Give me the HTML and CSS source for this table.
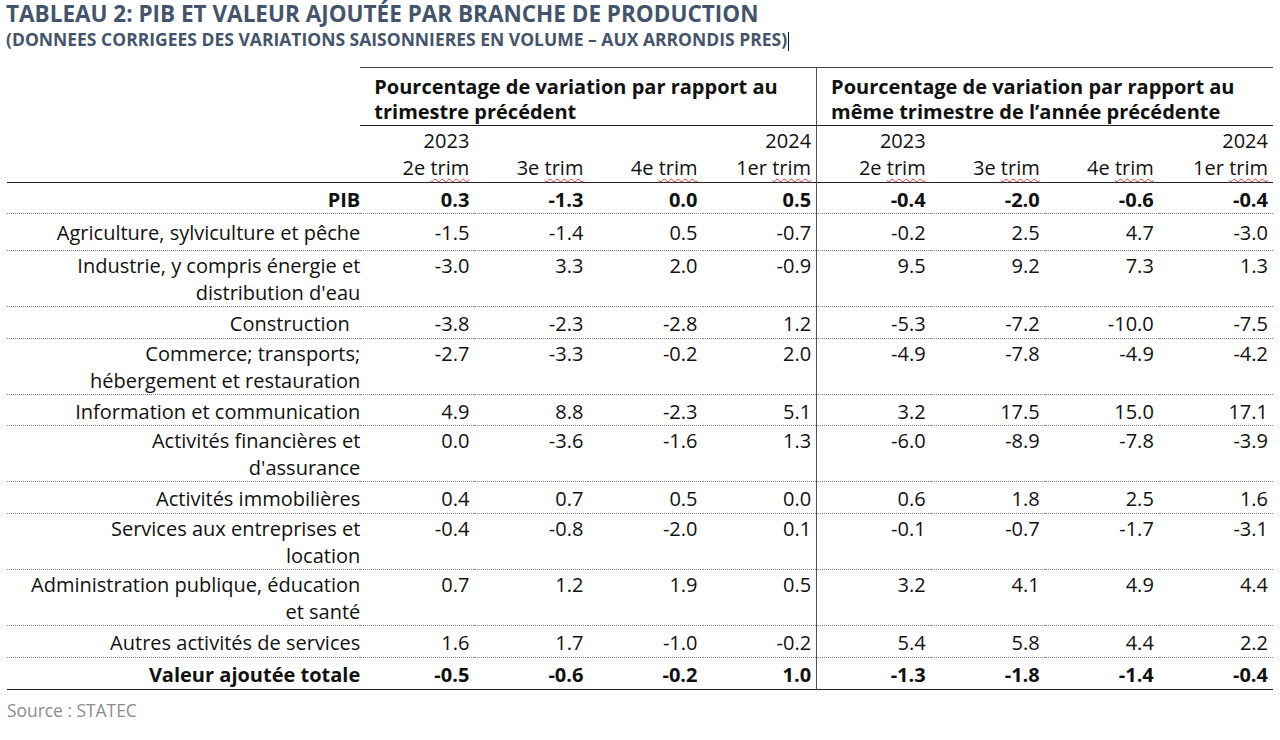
FILE: index.html
```html
<!DOCTYPE html>
<html lang="fr">
<head>
<meta charset="utf-8">
<title>Tableau 2</title>
<link rel="stylesheet" href="styles.css">
</head>
<body>
<h1 class="title">TABLEAU 2: PIB ET VALEUR AJOUTÉE PAR BRANCHE DE PRODUCTION</h1>
<p class="subtitle">(DONNEES CORRIGEES DES VARIATIONS SAISONNIERES EN VOLUME – AUX ARRONDIS PRES)<span class="caret"></span></p>
<table class="data">
  <colgroup>
    <col class="c-label">
    <col class="c-num"><col class="c-num"><col class="c-num"><col class="c-num">
    <col class="c-num"><col class="c-num"><col class="c-num"><col class="c-num">
  </colgroup>
  <thead>
    <tr class="grp">
      <th class="blank"></th>
      <th colspan="4" class="gh sep">Pourcentage de variation par rapport au<br>trimestre précédent</th>
      <th colspan="4" class="gh">Pourcentage de variation par rapport au<br>même trimestre de l’année précédente</th>
    </tr>
    <tr class="per">
      <th class="blank"></th>
      <th>2023<br>2e <span class="sp">trim</span></th>
      <th><br>3e <span class="sp">trim</span></th>
      <th><br>4e <span class="sp">trim</span></th>
      <th class="sep">2024<br>1er <span class="sp">trim</span></th>
      <th>2023<br>2e <span class="sp">trim</span></th>
      <th><br>3e <span class="sp">trim</span></th>
      <th><br>4e <span class="sp">trim</span></th>
      <th>2024<br>1er <span class="sp">trim</span></th>
    </tr>
  </thead>
  <tbody>
    <tr class="one short bold"><td>PIB</td><td>0.3</td><td>-1.3</td><td>0.0</td><td class="sep">0.5</td><td>-0.4</td><td>-2.0</td><td>-0.6</td><td>-0.4</td></tr>
    <tr class="one tall"><td>Agriculture, sylviculture et pêche</td><td>-1.5</td><td>-1.4</td><td>0.5</td><td class="sep">-0.7</td><td>-0.2</td><td>2.5</td><td>4.7</td><td>-3.0</td></tr>
    <tr class="two"><td>Industrie, y compris énergie et<br>distribution d'eau</td><td>-3.0</td><td>3.3</td><td>2.0</td><td class="sep">-0.9</td><td>9.5</td><td>9.2</td><td>7.3</td><td>1.3</td></tr>
    <tr class="one"><td>Construction&nbsp;&nbsp;</td><td>-3.8</td><td>-2.3</td><td>-2.8</td><td class="sep">1.2</td><td>-5.3</td><td>-7.2</td><td>-10.0</td><td>-7.5</td></tr>
    <tr class="two"><td>Commerce; transports;<br>hébergement et restauration</td><td>-2.7</td><td>-3.3</td><td>-0.2</td><td class="sep">2.0</td><td>-4.9</td><td>-7.8</td><td>-4.9</td><td>-4.2</td></tr>
    <tr class="one short"><td>Information et communication</td><td>4.9</td><td>8.8</td><td>-2.3</td><td class="sep">5.1</td><td>3.2</td><td>17.5</td><td>15.0</td><td>17.1</td></tr>
    <tr class="two"><td>Activités financières et<br>d'assurance</td><td>0.0</td><td>-3.6</td><td>-1.6</td><td class="sep">1.3</td><td>-6.0</td><td>-8.9</td><td>-7.8</td><td>-3.9</td></tr>
    <tr class="one"><td>Activités immobilières</td><td>0.4</td><td>0.7</td><td>0.5</td><td class="sep">0.0</td><td>0.6</td><td>1.8</td><td>2.5</td><td>1.6</td></tr>
    <tr class="two"><td>Services aux entreprises et<br>location</td><td>-0.4</td><td>-0.8</td><td>-2.0</td><td class="sep">0.1</td><td>-0.1</td><td>-0.7</td><td>-1.7</td><td>-3.1</td></tr>
    <tr class="two"><td>Administration publique, éducation<br>et santé</td><td>0.7</td><td>1.2</td><td>1.9</td><td class="sep">0.5</td><td>3.2</td><td>4.1</td><td>4.9</td><td>4.4</td></tr>
    <tr class="one"><td>Autres activités de services</td><td>1.6</td><td>1.7</td><td>-1.0</td><td class="sep">-0.2</td><td>5.4</td><td>5.8</td><td>4.4</td><td>2.2</td></tr>
    <tr class="one bold last"><td>Valeur ajoutée totale</td><td>-0.5</td><td>-0.6</td><td>-0.2</td><td class="sep">1.0</td><td>-1.3</td><td>-1.8</td><td>-1.4</td><td>-0.4</td></tr>
  </tbody>
</table>
<p class="source">Source : STATEC</p>
</body>
</html>
```

FILE: styles.css
```css
html, body {
  margin: 0;
  padding: 0;
  background: #ffffff;
}
body {
  padding: 0 7px;
  font-family: "Open Sans", "Liberation Sans", sans-serif;
  color: #111111;
}
.title {
  margin: 0 0 0 -1px;
  padding-top: 0;
  font-size: 22.5px;
  line-height: 27px;
  font-weight: 700;
  color: #44546a;
  white-space: nowrap;
}
.subtitle {
  margin: 0 0 0 -1px;
  font-size: 17.5px;
  line-height: 24px;
  font-weight: 700;
  color: #44546a;
  white-space: nowrap;
}
.caret {
  display: inline-block;
  width: 0;
  height: 19px;
  border-left: 1px solid #111;
  vertical-align: -5px;
  margin-left: 1px;
}
.data {
  margin-top: 16px;
  width: 1266px;
  border-collapse: collapse;
  table-layout: fixed;
  font-size: 20px;
}
.c-label { width: 353px; }
.c-num { width: 114px; }
.data th, .data td {
  padding: 1px 5px 0 0;
  line-height: 27px;
  vertical-align: top;
  text-align: right;
  font-weight: 400;
  white-space: nowrap;
}
.data td:first-child { padding-right: 0; }
.grp th.gh {
  text-align: left;
  font-weight: 700;
  line-height: 25px;
  padding: 6px 10px 1px 14px;
  border-top: 1px solid #444;
  border-bottom: 1px solid #222;
}
.grp th.blank { border: none; }
.per th { height: 55px; }
.per { border-bottom: 1px solid #222; }
.sep { border-right: 1px solid #555; }
.data tbody tr { border-bottom: 1px dotted #8a8a8a; }
.data tbody tr.last { border-bottom: 1px solid #222; }
.one { height: 32px; }
.one.short { height: 31px; }
.one td { padding-top: 3px; }
.two td { padding-top: 1px; }
.tall { height: 37px; }
.tall td { padding-top: 5px; }
.bold td { font-weight: 700; }
.sp {
  text-decoration: underline wavy #e03030;
  text-decoration-thickness: 1px;
  text-underline-offset: 3px;
}
.source {
  margin: 8px 0 0 0;
  font-size: 17.4px;
  line-height: 24px;
  color: #8c8c8c;
}
```
